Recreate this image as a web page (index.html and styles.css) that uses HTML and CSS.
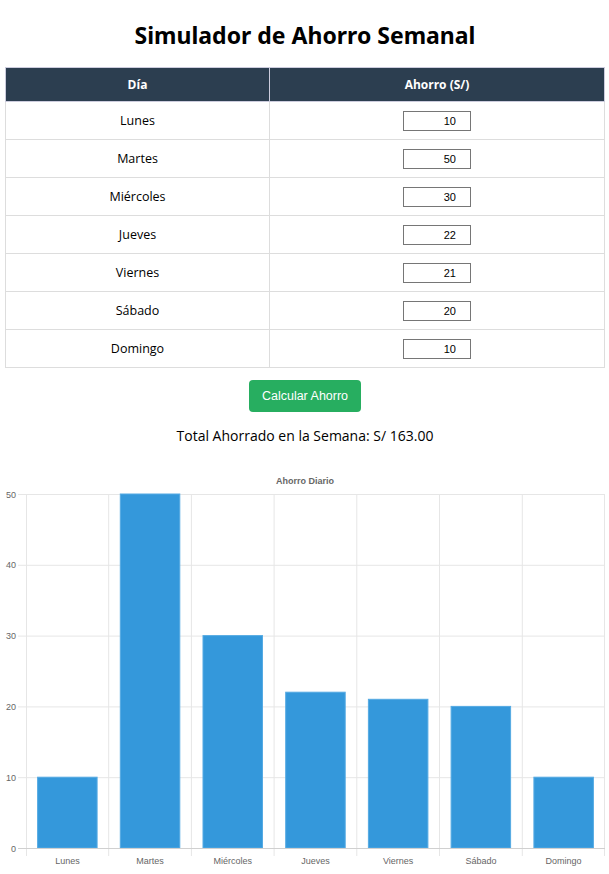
FILE: index.html
```html
<!DOCTYPE html>
<html lang="es">
<head>
<meta charset="utf-8">
<title>Simulador de Ahorro Semanal</title>
<link rel="stylesheet" href="styles.css">
</head>
<body>
<h1 class="title">Simulador de Ahorro Semanal</h1>
<table class="tabla">
  <thead>
    <tr><th class="col-dia">Día</th><th>Ahorro (S/)</th></tr>
  </thead>
  <tbody>
    <tr><td>Lunes</td><td><input class="monto" type="text" value="10"></td></tr>
    <tr><td>Martes</td><td><input class="monto" type="text" value="50"></td></tr>
    <tr><td>Miércoles</td><td><input class="monto" type="text" value="30"></td></tr>
    <tr><td>Jueves</td><td><input class="monto" type="text" value="22"></td></tr>
    <tr><td>Viernes</td><td><input class="monto" type="text" value="21"></td></tr>
    <tr><td>Sábado</td><td><input class="monto" type="text" value="20"></td></tr>
    <tr><td>Domingo</td><td><input class="monto" type="text" value="10"></td></tr>
  </tbody>
</table>
<div class="acciones"><button class="btn">Calcular Ahorro</button></div>
<p class="total">Total Ahorrado en la Semana: S/ 163.00</p>
<div class="chart">
<svg class="chart-svg" width="609" height="404" viewBox="0 0 609 404" xmlns="http://www.w3.org/2000/svg">
  <text x="305" y="14" class="ctitle" text-anchor="middle">Ahorro Diario</text>
  <g stroke="#e6e6e6" stroke-width="1">
    <line x1="18" y1="24.5" x2="605" y2="24.5"/>
    <line x1="18" y1="95.3" x2="605" y2="95.3"/>
    <line x1="18" y1="166.1" x2="605" y2="166.1"/>
    <line x1="18" y1="236.9" x2="605" y2="236.9"/>
    <line x1="18" y1="307.7" x2="605" y2="307.7"/>
    <line x1="26.5" y1="24" x2="26.5" y2="386"/>
    <line x1="108.7" y1="24" x2="108.7" y2="386"/>
    <line x1="191.4" y1="24" x2="191.4" y2="386"/>
    <line x1="274.1" y1="24" x2="274.1" y2="386"/>
    <line x1="356.8" y1="24" x2="356.8" y2="386"/>
    <line x1="439.5" y1="24" x2="439.5" y2="386"/>
    <line x1="522.3" y1="24" x2="522.3" y2="386"/>
    <line x1="604.5" y1="24" x2="604.5" y2="386"/>
  </g>
  <g fill="#3498db" stroke="#55aae3" stroke-width="1">
    <rect x="37.6" y="307.2" width="59.5" height="70.8"/>
    <rect x="120.3" y="24" width="59.5" height="354"/>
    <rect x="203" y="165.6" width="59.5" height="212.4"/>
    <rect x="285.7" y="222.2" width="59.5" height="155.8"/>
    <rect x="368.4" y="229.3" width="59.5" height="148.7"/>
    <rect x="451.1" y="236.4" width="59.5" height="141.6"/>
    <rect x="533.9" y="307.2" width="59.5" height="70.8"/>
  </g>
  <line x1="18" y1="378.5" x2="605" y2="378.5" stroke="#d0d0d0" stroke-width="1"/>
  <g class="tick" text-anchor="end">
    <text x="16" y="27.5">50</text>
    <text x="16" y="98.3">40</text>
    <text x="16" y="169.1">30</text>
    <text x="16" y="239.9">20</text>
    <text x="16" y="310.7">10</text>
    <text x="16" y="381.5">0</text>
  </g>
  <g class="tick" text-anchor="middle">
    <text x="67.4" y="394">Lunes</text>
    <text x="150.1" y="394">Martes</text>
    <text x="232.8" y="394">Miércoles</text>
    <text x="315.5" y="394">Jueves</text>
    <text x="398.2" y="394">Viernes</text>
    <text x="480.9" y="394">Sábado</text>
    <text x="563.6" y="394">Domingo</text>
  </g>
</svg>
</div>
</body>
</html>
```
FILE: styles.css
```css
html, body {
  margin: 0;
  padding: 0;
  background: #fff;
}
body {
  padding: 0 4px 0 5px;
  font-family: "Open Sans", "Noto Sans", sans-serif;
  color: #000;
}
.title {
  margin: 0;
  padding-top: 19px;
  height: 67px;
  box-sizing: border-box;
  text-align: center;
  font-family: "Noto Sans", sans-serif;
  font-size: 23px;
  font-weight: 700;
  line-height: 32px;
}
.tabla {
  width: 600px;
  border-collapse: collapse;
}
.tabla th, .tabla td {
  border: 1px solid #ddd;
  text-align: center;
  padding: 0;
}
.tabla th {
  background: #2c3e50;
  color: #fff;
  font-size: 12px;
  font-weight: 700;
  height: 33px;
  border-color: #ccd;
}
.tabla td {
  height: 37px;
  font-size: 12.5px;
}
.col-dia {
  width: 263px;
}
.monto {
  width: 68px;
  height: 20px;
  box-sizing: border-box;
  border: 1px solid #767676;
  border-radius: 0;
  font-family: "Liberation Sans", Arial, sans-serif;
  font-size: 11px;
  text-align: right;
  padding: 0 14px 0 2px;
  margin: 0;
  vertical-align: middle;
}
.acciones {
  display: flex;
  justify-content: center;
  padding-top: 12px;
}
.btn {
  width: 112px;
  height: 32px;
  background: #27ae60;
  color: #fff;
  border: none;
  border-radius: 4px;
  font-family: "Liberation Sans", Arial, sans-serif;
  font-size: 12.5px;
}
.total {
  margin: 0;
  padding-top: 14px;
  text-align: center;
  font-size: 14px;
  line-height: 20px;
}
.chart {
  margin: 24px -4px 0 -5px;
  height: 404px;
}
.chart-svg {
  display: block;
}
.ctitle {
  font-family: "Liberation Sans", Arial, sans-serif;
  font-size: 9px;
  font-weight: 700;
  fill: #666;
}
.tick {
  font-family: "Liberation Sans", Arial, sans-serif;
  font-size: 9px;
  fill: #666;
}
```
